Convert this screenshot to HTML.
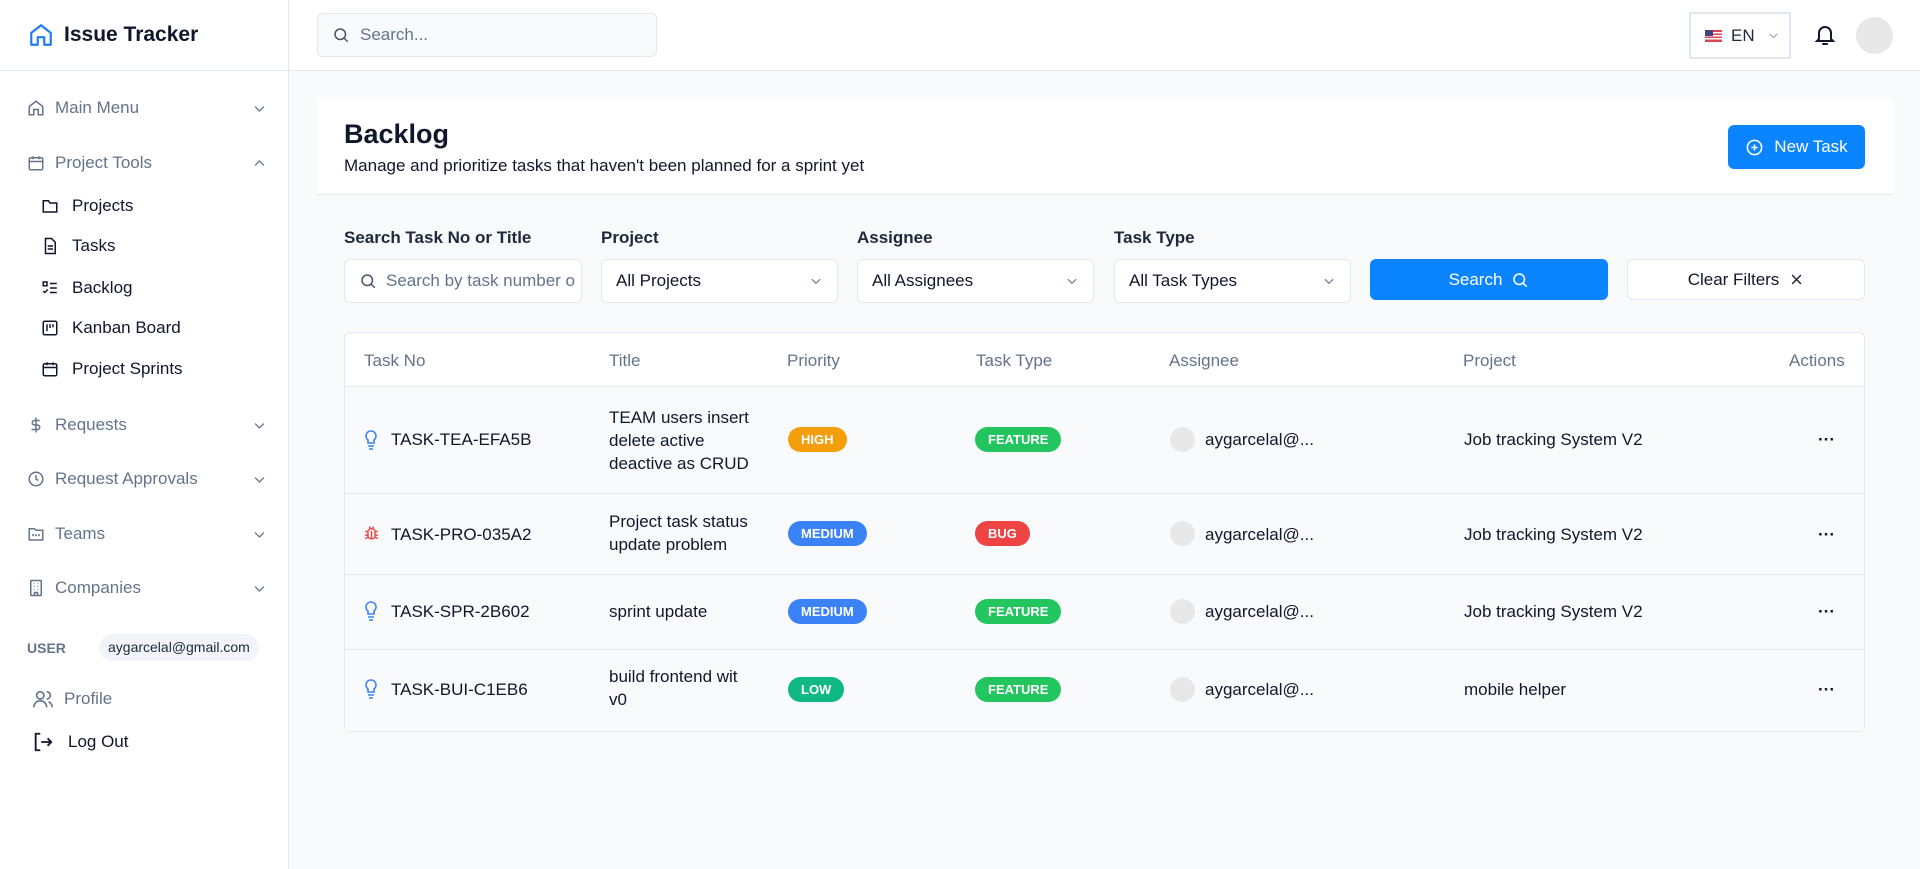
<!DOCTYPE html>
<html><head><meta charset="utf-8"><style>
*{box-sizing:border-box;margin:0;padding:0}
body{width:1920px;height:869px;overflow:hidden;font-family:"Liberation Sans",sans-serif;background:#f8fafc;color:#0f172a;position:relative}
.abs{position:absolute}
.side{left:0;top:0;width:289px;height:869px;background:#fff;border-right:1px solid #e2e8f0}
.top{left:289px;top:0;right:0;height:71px;background:#fff;border-bottom:1px solid #e2e8f0}
.logo{left:0;top:0;width:289px;height:71px;border-bottom:1px solid #e2e8f0}
.nav{font-size:17px;color:#64748b;display:flex;align-items:center;height:24px}
.sub{font-size:17px;color:#0f172a;display:flex;align-items:center;height:24px}
svg{display:block}
.lbl{font-size:17px;color:#1e293b;font-weight:600}
.inp{background:#fff;border:1px solid #e2e8f0;border-radius:6px;height:44px;display:flex;align-items:center;font-size:17px;padding:0 14px;color:#0f172a}
.th{font-size:17px;color:#64748b;top:351px}
.badge{display:inline-block;color:#fff;font-weight:700;font-size:13px;height:25px;line-height:25px;padding:0 13px;border-radius:13px}
.td{font-size:17px;color:#0f172a}
.row{left:345px;width:1519px;border-top:1px solid #e2e8f0;background:#f8fafc}
.av{width:25px;height:25px;border-radius:50%;background:#e8e8e8}
.dots{font-size:17px;font-weight:700;left:1818px}
</style></head><body>
<div class="abs side"></div>
<div class="abs logo">
 <svg class="abs" style="left:28px;top:22px" width="26" height="26" viewBox="0 0 24 24" fill="none" stroke="#1d7bf5" stroke-width="2" stroke-linejoin="round"><path d="M3 10L12 3l9 7v11H15v-7H9v7H3z"/></svg>
 <div class="abs" style="left:64px;top:23px;font-size:21px;font-weight:700;color:#0f172a">Issue Tracker</div>
</div>
<div class="abs top"></div>
<div class="abs inp" style="left:317px;top:13px;width:340px;height:44px;background:#f8fafc;color:#64748b">
 <svg width="18" height="18" viewBox="0 0 24 24" fill="none" stroke="#475569" stroke-width="2"><circle cx="11" cy="11" r="7"/><path d="M16 16l5 5"/></svg><span style="margin-left:10px">Search...</span></div>
<div class="abs" style="left:1689px;top:12px;width:102px;height:47px;border:2px solid #e2e8f0;background:#fff;display:flex;align-items:center;padding-left:14px;font-size:17px;color:#1e293b">
 <svg width="17" height="12" viewBox="0 0 17 12"><rect width="17" height="12" fill="#d45"/><rect y="2" width="17" height="1.5" fill="#fff"/><rect y="5" width="17" height="1.5" fill="#fff"/><rect y="8" width="17" height="1.5" fill="#fff"/><rect width="8" height="6" fill="#447"/></svg>
 <span style="margin-left:9px">EN</span>
 <svg style="margin-left:12px" width="13" height="13" viewBox="0 0 24 24" fill="none" stroke="#94a3b8" stroke-width="2"><path d="M5 9l7 7 7-7"/></svg></div>
<svg class="abs" style="left:1813px;top:23px" width="24" height="24" viewBox="0 0 24 24" fill="none" stroke="#0f172a" stroke-width="2" stroke-linecap="round"><path d="M6 16V10a6 6 0 0112 0v6l2 2H4z"/><path d="M10 21h4"/></svg>
<div class="abs" style="left:1856px;top:17px;width:37px;height:37px;border-radius:50%;background:#e8e8e8"></div>

<div class="abs nav" style="left:27px;top:96px;width:240px">
 <svg width="18" height="18" viewBox="0 0 24 24" fill="none" stroke="#64748b" stroke-width="2"><path d="M3 10L12 3l9 7v11H15v-7H9v7H3z"/></svg><span style="margin-left:10px">Main Menu</span>
 <svg style="margin-left:auto" width="15" height="15" viewBox="0 0 24 24" fill="none" stroke="#64748b" stroke-width="2"><path d="M5 9l7 7 7-7"/></svg></div>
<div class="abs nav" style="left:27px;top:151px;width:240px">
 <svg width="18" height="18" viewBox="0 0 24 24" fill="none" stroke="#64748b" stroke-width="2"><rect x="3" y="5" width="18" height="16" rx="2"/><path d="M3 10h18M8 3v4M16 3v4"/></svg><span style="margin-left:10px">Project Tools</span>
 <svg style="margin-left:auto" width="15" height="15" viewBox="0 0 24 24" fill="none" stroke="#64748b" stroke-width="2"><path d="M5 15l7-7 7 7"/></svg></div>
<div class="abs sub" style="left:41px;top:194px"><svg width="18" height="18" viewBox="0 0 24 24" fill="none" stroke="#0f172a" stroke-width="2"><path d="M3 5h7l2 3h9v12H3z"/></svg><span style="margin-left:13px">Projects</span></div>
<div class="abs sub" style="left:41px;top:234px"><svg width="18" height="18" viewBox="0 0 24 24" fill="none" stroke="#0f172a" stroke-width="2"><path d="M6 2h8l5 5v15H6z"/><path d="M9 12h7M9 16h7"/></svg><span style="margin-left:13px">Tasks</span></div>
<div class="abs sub" style="left:41px;top:276px"><svg width="18" height="18" viewBox="0 0 24 24" fill="none" stroke="#0f172a" stroke-width="2"><rect x="3" y="4" width="5" height="5"/><path d="M3 16l2 2 4-4M12 6h9M12 12h9M12 18h9"/></svg><span style="margin-left:13px">Backlog</span></div>
<div class="abs sub" style="left:41px;top:316px"><svg width="18" height="18" viewBox="0 0 24 24" fill="none" stroke="#0f172a" stroke-width="2"><rect x="3" y="3" width="18" height="18" rx="2"/><path d="M8 7v9M12 7v5M16 7v4"/></svg><span style="margin-left:13px">Kanban Board</span></div>
<div class="abs sub" style="left:41px;top:357px"><svg width="18" height="18" viewBox="0 0 24 24" fill="none" stroke="#0f172a" stroke-width="2"><rect x="3" y="5" width="18" height="16" rx="2"/><path d="M3 10h18M8 3v4M16 3v4"/></svg><span style="margin-left:13px">Project Sprints</span></div>
<div class="abs nav" style="left:27px;top:413px;width:240px"><svg width="18" height="18" viewBox="0 0 24 24" fill="none" stroke="#64748b" stroke-width="2"><path d="M12 2v20M17 6H10a3 3 0 000 6h4a3 3 0 010 6H6"/></svg><span style="margin-left:10px">Requests</span><svg style="margin-left:auto" width="15" height="15" viewBox="0 0 24 24" fill="none" stroke="#64748b" stroke-width="2"><path d="M5 9l7 7 7-7"/></svg></div>
<div class="abs nav" style="left:27px;top:467px;width:240px"><svg width="18" height="18" viewBox="0 0 24 24" fill="none" stroke="#64748b" stroke-width="2"><circle cx="12" cy="12" r="9"/><path d="M12 7v5l3 2"/></svg><span style="margin-left:10px">Request Approvals</span><svg style="margin-left:auto" width="15" height="15" viewBox="0 0 24 24" fill="none" stroke="#64748b" stroke-width="2"><path d="M5 9l7 7 7-7"/></svg></div>
<div class="abs nav" style="left:27px;top:522px;width:240px"><svg width="18" height="18" viewBox="0 0 24 24" fill="none" stroke="#64748b" stroke-width="2"><path d="M3 5h7l2 2h9v13H3z"/><path d="M8 12v3M12 12v3M16 12v3"/></svg><span style="margin-left:10px">Teams</span><svg style="margin-left:auto" width="15" height="15" viewBox="0 0 24 24" fill="none" stroke="#64748b" stroke-width="2"><path d="M5 9l7 7 7-7"/></svg></div>
<div class="abs nav" style="left:27px;top:576px;width:240px"><svg width="18" height="18" viewBox="0 0 24 24" fill="none" stroke="#64748b" stroke-width="2"><rect x="5" y="2" width="14" height="20" rx="1"/><path d="M9 6h1M14 6h1M9 10h1M14 10h1M9 14h1M14 14h1M10 22v-4h4v4"/></svg><span style="margin-left:10px">Companies</span><svg style="margin-left:auto" width="15" height="15" viewBox="0 0 24 24" fill="none" stroke="#64748b" stroke-width="2"><path d="M5 9l7 7 7-7"/></svg></div>
<div class="abs" style="left:27px;top:640px;font-size:14px;font-weight:700;color:#64748b">USER</div>
<div class="abs" style="left:99px;top:634px;height:27px;padding:0 9px;line-height:27px;border-radius:14px;background:#f1f5f9;font-size:14px;color:#1e293b">aygarcelal@gmail.com</div>
<div class="abs nav" style="left:32px;top:687px"><svg width="22" height="22" viewBox="0 0 24 24" fill="none" stroke="#64748b" stroke-width="1.8"><circle cx="9" cy="8" r="4"/><path d="M2 21c0-4 3-7 7-7s7 3 7 7M16 4a4 4 0 010 8M22 21c0-3-2-5-4-6"/></svg><span style="margin-left:10px">Profile</span></div>
<div class="abs sub" style="left:32px;top:730px"><svg width="22" height="22" viewBox="0 0 24 24" fill="none" stroke="#0f172a" stroke-width="2"><path d="M9 3H4v18h5M10 12h11M17 8l4 4-4 4"/></svg><span style="margin-left:14px">Log Out</span></div>

<div class="abs" style="left:317px;top:99px;width:1576px;height:96px;background:#fff;border-bottom:1px solid #e2e8f0"></div>
<div class="abs" style="left:344px;top:119px;font-size:27px;font-weight:700;color:#0f172a">Backlog</div>
<div class="abs" style="left:344px;top:156px;font-size:17px;color:#0f172a">Manage and prioritize tasks that haven't been planned for a sprint yet</div>
<div class="abs" style="left:1728px;top:125px;width:137px;height:44px;background:#0a84ff;border-radius:6px;color:#fff;font-size:17px;display:flex;align-items:center;justify-content:center">
 <svg width="19" height="19" viewBox="0 0 24 24" fill="none" stroke="#fff" stroke-width="2"><circle cx="12" cy="12" r="9"/><path d="M12 8v8M8 12h8"/></svg><span style="margin-left:10px">New Task</span></div>

<div class="abs lbl" style="left:344px;top:228px">Search Task No or Title</div>
<div class="abs lbl" style="left:601px;top:228px">Project</div>
<div class="abs lbl" style="left:857px;top:228px">Assignee</div>
<div class="abs lbl" style="left:1114px;top:228px">Task Type</div>
<div class="abs inp" style="left:344px;top:259px;width:238px;color:#64748b;overflow:hidden;white-space:nowrap"><svg style="flex:none" width="18" height="18" viewBox="0 0 24 24" fill="none" stroke="#475569" stroke-width="2"><circle cx="11" cy="11" r="7"/><path d="M16 16l5 5"/></svg><span style="margin-left:9px">Search by task number o</span></div>
<div class="abs inp" style="left:601px;top:259px;width:237px">All Projects<svg style="margin-left:auto" width="14" height="14" viewBox="0 0 24 24" fill="none" stroke="#64748b" stroke-width="2"><path d="M5 9l7 7 7-7"/></svg></div>
<div class="abs inp" style="left:857px;top:259px;width:237px">All Assignees<svg style="margin-left:auto" width="14" height="14" viewBox="0 0 24 24" fill="none" stroke="#64748b" stroke-width="2"><path d="M5 9l7 7 7-7"/></svg></div>
<div class="abs inp" style="left:1114px;top:259px;width:237px">All Task Types<svg style="margin-left:auto" width="14" height="14" viewBox="0 0 24 24" fill="none" stroke="#64748b" stroke-width="2"><path d="M5 9l7 7 7-7"/></svg></div>
<div class="abs" style="left:1370px;top:259px;width:238px;height:41px;background:#0a84ff;border-radius:6px;color:#fff;font-size:17px;display:flex;align-items:center;justify-content:center">Search<svg style="margin-left:9px" width="18" height="18" viewBox="0 0 24 24" fill="none" stroke="#fff" stroke-width="2"><circle cx="11" cy="11" r="7"/><path d="M16 16l5 5"/></svg></div>
<div class="abs" style="left:1627px;top:259px;width:238px;height:41px;background:#fff;border:1px solid #e2e8f0;border-radius:6px;color:#0f172a;font-size:17px;display:flex;align-items:center;justify-content:center">Clear Filters<svg style="margin-left:10px" width="15" height="15" viewBox="0 0 24 24" fill="none" stroke="#0f172a" stroke-width="2"><path d="M5 5l14 14M19 5L5 19"/></svg></div>

<div class="abs" style="left:344px;top:332px;width:1521px;height:400px;background:#fff;border:1px solid #e2e8f0;border-radius:6px;overflow:hidden"></div>
<div class="abs th" style="left:364px">Task No</div>
<div class="abs th" style="left:609px">Title</div>
<div class="abs th" style="left:787px">Priority</div>
<div class="abs th" style="left:976px">Task Type</div>
<div class="abs th" style="left:1169px">Assignee</div>
<div class="abs th" style="left:1463px">Project</div>
<div class="abs th" style="left:1789px">Actions</div>

<div class="abs row" style="top:386px;height:107px"></div>
<div class="abs row" style="top:493px;height:81px"></div>
<div class="abs row" style="top:574px;height:75px"></div>
<div class="abs row" style="top:649px;height:82px"></div>

<svg class="abs" style="left:364px;top:430px" width="14" height="20" viewBox="0 0 14 20" fill="none" stroke="#3b82f6" stroke-width="1.6"><path d="M7 1a5 5 0 00-3 9v3h6v-3a5 5 0 00-3-9zM4 16h6M5 19h4"/></svg>
<div class="abs td" style="left:391px;top:430px">TASK-TEA-EFA5B</div>
<div class="abs td" style="left:609px;top:406px;line-height:23px">TEAM users insert<br>delete active<br>deactive as CRUD</div>
<div class="abs" style="left:788px;top:427px"><span class="badge" style="background:#f59e0b">HIGH</span></div>
<div class="abs" style="left:975px;top:427px"><span class="badge" style="background:#22c55e">FEATURE</span></div>
<div class="abs av" style="left:1170px;top:427px"></div><div class="abs td" style="left:1205px;top:430px">aygarcelal@...</div>
<div class="abs td" style="left:1464px;top:430px">Job tracking System V2</div>
<div class="abs dots" style="top:430px">···</div>

<svg class="abs" style="left:363px;top:524px" width="17" height="18" viewBox="0 0 24 24" fill="none" stroke="#ef4444" stroke-width="2"><rect x="7" y="6" width="10" height="14" rx="4"/><path d="M12 9v11M3 10h4M17 10h4M3 15h4M17 15h4M3 20l4-2M21 20l-4-2M9 3l2 3M15 3l-2 3"/></svg>
<div class="abs td" style="left:391px;top:525px">TASK-PRO-035A2</div>
<div class="abs td" style="left:609px;top:510px;line-height:23px">Project task status<br>update problem</div>
<div class="abs" style="left:788px;top:521px"><span class="badge" style="background:#3b82f6">MEDIUM</span></div>
<div class="abs" style="left:975px;top:521px"><span class="badge" style="background:#ef4444">BUG</span></div>
<div class="abs av" style="left:1170px;top:521px"></div><div class="abs td" style="left:1205px;top:525px">aygarcelal@...</div>
<div class="abs td" style="left:1464px;top:525px">Job tracking System V2</div>
<div class="abs dots" style="top:525px">···</div>

<svg class="abs" style="left:364px;top:601px" width="14" height="20" viewBox="0 0 14 20" fill="none" stroke="#3b82f6" stroke-width="1.6"><path d="M7 1a5 5 0 00-3 9v3h6v-3a5 5 0 00-3-9zM4 16h6M5 19h4"/></svg>
<div class="abs td" style="left:391px;top:602px">TASK-SPR-2B602</div>
<div class="abs td" style="left:609px;top:602px">sprint update</div>
<div class="abs" style="left:788px;top:599px"><span class="badge" style="background:#3b82f6">MEDIUM</span></div>
<div class="abs" style="left:975px;top:599px"><span class="badge" style="background:#22c55e">FEATURE</span></div>
<div class="abs av" style="left:1170px;top:599px"></div><div class="abs td" style="left:1205px;top:602px">aygarcelal@...</div>
<div class="abs td" style="left:1464px;top:602px">Job tracking System V2</div>
<div class="abs dots" style="top:602px">···</div>

<svg class="abs" style="left:364px;top:679px" width="14" height="20" viewBox="0 0 14 20" fill="none" stroke="#3b82f6" stroke-width="1.6"><path d="M7 1a5 5 0 00-3 9v3h6v-3a5 5 0 00-3-9zM4 16h6M5 19h4"/></svg>
<div class="abs td" style="left:391px;top:680px">TASK-BUI-C1EB6</div>
<div class="abs td" style="left:609px;top:665px;line-height:23px">build frontend wit<br>v0</div>
<div class="abs" style="left:788px;top:677px"><span class="badge" style="background:#10b981">LOW</span></div>
<div class="abs" style="left:975px;top:677px"><span class="badge" style="background:#22c55e">FEATURE</span></div>
<div class="abs av" style="left:1170px;top:677px"></div><div class="abs td" style="left:1205px;top:680px">aygarcelal@...</div>
<div class="abs td" style="left:1464px;top:680px">mobile helper</div>
<div class="abs dots" style="top:680px">···</div>
</body></html>
